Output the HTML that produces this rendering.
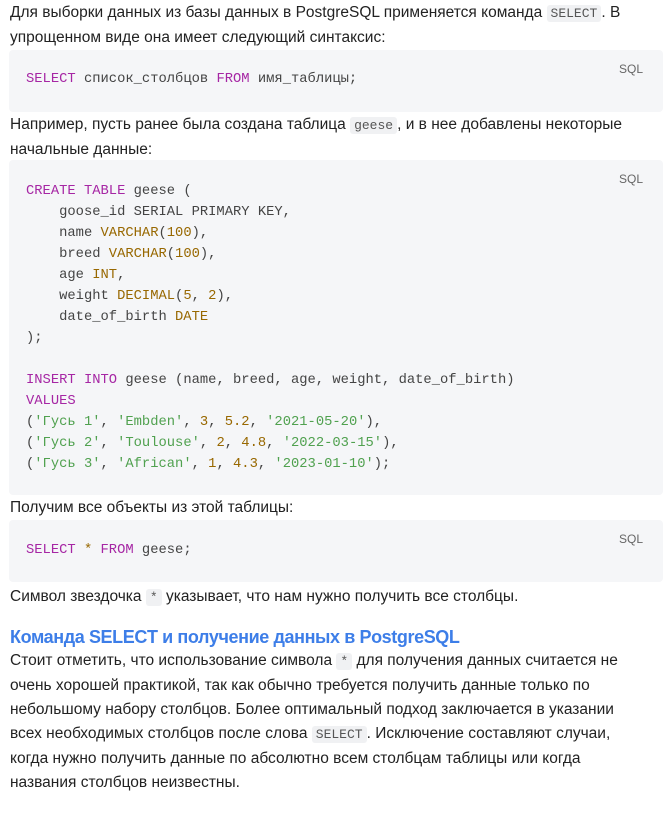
<!DOCTYPE html>
<html><head><meta charset="utf-8"><style>
body{margin:0;background:#fff;width:663px;height:815px;overflow:hidden;position:relative;font-family:"Liberation Sans",sans-serif;color:#24292f}
.t{position:absolute;left:10px;font-size:15.5px;line-height:24px;white-space:nowrap;letter-spacing:0;color:#222}
.c{font-family:"Liberation Mono",monospace;font-size:13px;background:#f0f1f3;color:#555;padding:1px 4px;border-radius:3px;letter-spacing:0}
.b{position:absolute;left:9px;width:654px;background:#f5f6f8;border-radius:4px}
.b pre{margin:0;position:absolute;left:17px;font-family:"Liberation Mono",monospace;font-size:13.8px;line-height:21px;color:#444}
.l{position:absolute;right:20px;top:12px;font-size:12px;color:#666}
.k{color:#a626a4}.s{color:#50a14f}.n{color:#986801}
h2{position:absolute;left:10px;top:625px;margin:0;font-size:18px;line-height:24px;color:#3d7ee8;font-weight:bold;letter-spacing:-0.4px;white-space:nowrap}
</style></head><body>
<div class="t" style="top:1px">Для выборки данных из базы данных в PostgreSQL применяется команда <span class="c">SELECT</span>. В<br>упрощенном виде она имеет следующий синтаксис:</div>
<div class="b" style="top:50px;height:62px"><span class="l">SQL</span><pre style="top:19px"><span class="k">SELECT</span> список_столбцов <span class="k">FROM</span> имя_таблицы;</pre></div>
<div class="t" style="top:113px">Например, пусть ранее была создана таблица <span class="c">geese</span>, и в нее добавлены некоторые<br>начальные данные:</div>
<div class="b" style="top:160px;height:335px"><span class="l">SQL</span><pre style="top:21px"><span class="k">CREATE</span> <span class="k">TABLE</span> geese (
    goose_id SERIAL PRIMARY KEY,
    name <span class="n">VARCHAR</span>(<span class="n">100</span>),
    breed <span class="n">VARCHAR</span>(<span class="n">100</span>),
    age <span class="n">INT</span>,
    weight <span class="n">DECIMAL</span>(<span class="n">5</span>, <span class="n">2</span>),
    date_of_birth <span class="n">DATE</span>
);

<span class="k">INSERT</span> <span class="k">INTO</span> geese (name, breed, age, weight, date_of_birth)
<span class="k">VALUES</span>
(<span class="s">'Гусь 1'</span>, <span class="s">'Embden'</span>, <span class="n">3</span>, <span class="n">5.2</span>, <span class="s">'2021-05-20'</span>),
(<span class="s">'Гусь 2'</span>, <span class="s">'Toulouse'</span>, <span class="n">2</span>, <span class="n">4.8</span>, <span class="s">'2022-03-15'</span>),
(<span class="s">'Гусь 3'</span>, <span class="s">'African'</span>, <span class="n">1</span>, <span class="n">4.3</span>, <span class="s">'2023-01-10'</span>);</pre></div>
<div class="t" style="top:496px">Получим все объекты из этой таблицы:</div>
<div class="b" style="top:520px;height:62px"><span class="l">SQL</span><pre style="top:20px"><span class="k">SELECT</span> <span class="n">*</span> <span class="k">FROM</span> geese;</pre></div>
<div class="t" style="top:585px">Символ звездочка <span class="c">*</span> указывает, что нам нужно получить все столбцы.</div>
<h2>Команда SELECT и получение данных в PostgreSQL</h2>
<div class="t" style="top:649px">Стоит отметить, что использование символа <span class="c">*</span> для получения данных считается не<br>очень хорошей практикой, так как обычно требуется получить данные только по<br>небольшому набору столбцов. Более оптимальный подход заключается в указании<br>всех необходимых столбцов после слова <span class="c">SELECT</span>. Исключение составляют случаи,<br>когда нужно получить данные по абсолютно всем столбцам таблицы или когда<br>названия столбцов неизвестны.</div>
</body></html>
